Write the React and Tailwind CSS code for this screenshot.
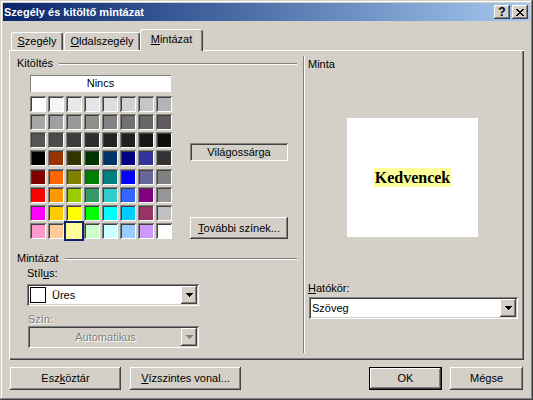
import React from "react";

// classic 3D edges
const raised =
  "shadow-[inset_-1px_-1px_#404040,inset_1px_1px_#ffffff,inset_-2px_-2px_#808080,inset_2px_2px_#d4d0c8]";
const sunken =
  "shadow-[inset_1px_1px_#808080,inset_-1px_-1px_#ffffff,inset_2px_2px_#404040,inset_-2px_-2px_#d4d0c8]";

const palette = [
  ["#ffffff", "#f7f5f7", "#e8e8e8", "#e6e4e8", "#dddcdf", "#d2d2d2", "#c6c5c8", "#b4b3b5"],
  ["#a6a6a6", "#a19fa2", "#98979a", "#8d8f8b", "#838183", "#727073", "#646763", "#5e5c5f"],
  ["#555555", "#4a4c4a", "#3c3c3c", "#2e2e2e", "#232421", "#202020", "#171717", "#0c0f0c"],
  ["#000000", "#993300", "#333300", "#003300", "#003366", "#000080", "#333399", "#333333"],
  ["#800000", "#ff6600", "#808000", "#008000", "#008080", "#0000ff", "#666699", "#808080"],
  ["#ff0000", "#ff9900", "#99cc00", "#339966", "#33cccc", "#3366ff", "#800080", "#969696"],
  ["#ff00ff", "#ffcc00", "#ffff00", "#00ff00", "#00ffff", "#00ccff", "#993366", "#c0c0c0"],
  ["#ff99cc", "#ffcc99", "#ffff99", "#ccffcc", "#ccffff", "#99ccff", "#cc99ff", "#ffffff"],
];

const DropButton = ({ disabled }) => (
  <div className={`w-4 h-full flex items-center justify-center bg-[#d4d0c8] ${raised}`}>
    <svg width="7" height="4" viewBox="0 0 7 4" shapeRendering="crispEdges">
      <path
        d="M0 0h7v1H0zM1 1h5v1H1zM2 2h3v1H2zM3 3h1v1H3z"
        fill={disabled ? "#808080" : "#000000"}
      />
    </svg>
  </div>
);

const Button = ({ className = "", children }) => (
  <div
    className={`h-[23px] flex items-center justify-center bg-[#d4d0c8] ${raised} ${className}`}
  >
    {children}
  </div>
);

const GroupHeader = ({ label, className = "" }) => (
  <div className={`flex items-center h-[13px] ${className}`}>
    <span>{label}</span>
    <div className="flex-1 ml-[6px] h-[2px] border-t border-t-[#808080] border-b border-b-white" />
  </div>
);

const Tab = ({ active, className = "", children }) => (
  <div
    className={`flex items-center justify-center bg-[#d4d0c8] border-l border-t border-white border-r border-r-[#404040] rounded-t-[3px] shadow-[inset_-1px_0_#808080] ${
      active ? "relative z-10 h-[22px] -mb-[1px] pb-[2px]" : "h-[18px]"
    } ${className}`}
  >
    {children}
  </div>
);

export default function App() {
  return (
    <div className="w-[533px] h-[400px] bg-[#d4d0c8] p-[3px] flex flex-col text-[11px] leading-[13px] text-black font-['Liberation_Sans',Arial,sans-serif] shadow-[inset_-1px_-1px_#404040,inset_1px_1px_#d4d0c8,inset_-2px_-2px_#808080,inset_2px_2px_#ffffff]">
      {/* Title bar */}
      <div className="h-[18px] flex items-center pl-[1px] pr-[2px] bg-linear-to-r from-[#0a246a] to-[#a6caf0]">
        <span className="font-bold text-white">Szegély és kitöltő mintázat</span>
        <div className="ml-auto flex gap-[2px]">
          <div className={`w-4 h-[14px] flex items-center justify-center bg-[#d4d0c8] font-bold text-[12px] leading-none ${raised}`}>
            ?
          </div>
          <div className={`w-4 h-[14px] flex items-center justify-center bg-[#d4d0c8] ${raised}`}>
            <svg width="8" height="7" viewBox="0 0 8 7" shapeRendering="crispEdges">
              <path
                d="M0 0h2v1H0zM6 0h2v1H6zM1 1h2v1H1zM5 1h2v1H5zM2 2h4v1H2zM3 3h2v1H3zM2 4h4v1H2zM1 5h2v1H1zM5 5h2v1H5zM0 6h2v1H0zM6 6h2v1H6z"
                fill="#000"
              />
            </svg>
          </div>
        </div>
      </div>

      {/* Tabs */}
      <div className="mt-[8px] ml-[6px] h-[21px] flex items-end">
        <Tab className="ml-[2px] w-[52px]">
          <span><u>S</u>zegély</span>
        </Tab>
        <Tab className="ml-[1px] w-[76px]">
          <span><u>O</u>ldalszegély</span>
        </Tab>
        <Tab active className="w-[63px]">
          <span><u>M</u>intázat</span>
        </Tab>
      </div>

      {/* Tab panel */}
      <div className="ml-[6px] w-[515px] h-[310px] flex shadow-[inset_1px_1px_#ffffff,inset_-1px_-1px_#404040,inset_-2px_-2px_#808080]">
        {/* Left column */}
        <div className="w-[294px] flex flex-col">
          <GroupHeader label="Kitöltés" className="mt-[7px] ml-[8px] mr-[6px]" />
          <div className="mt-[5px] ml-[21px] w-[141px] h-[17px] bg-white flex items-center justify-center shadow-[inset_1px_1px_#808080]">
            Nincs
          </div>
          <div className="mt-[4px] flex">
            <div className="ml-[21px] grid grid-cols-8 gap-[2px]">
              {palette.flat().map((c, i) =>
                i === 58 ? (
                  <div
                    key={i}
                    className="w-4 h-4 outline-2 outline-[#0a246a]"
                    style={{ backgroundColor: c }}
                  />
                ) : (
                  <div
                    key={i}
                    className="w-4 h-4 pl-[2px] pt-[2px] pr-[1px] pb-[1px] shadow-[inset_1px_1px_#808080,inset_-1px_-1px_#ffffff,inset_2px_2px_#404040]"
                  >
                    <div className="w-full h-full" style={{ backgroundColor: c }} />
                  </div>
                )
              )}
            </div>
            <div className="ml-[18px] flex flex-col">
              <div className="mt-[47px] w-[98px] h-[18px] flex items-center justify-center shadow-[inset_1px_1px_#808080,inset_-1px_-1px_#ffffff,inset_2px_2px_#404040]">
                Világossárga
              </div>
              <Button className="mt-[56px] w-[98px] !h-[22px]">
                <span><u>T</u>ovábbi színek...</span>
              </Button>
            </div>
          </div>

          <GroupHeader label="Mintázat" className="mt-[13px] ml-[8px] mr-[6px]" />
          <div className="mt-[2px] ml-[18px]">
            Stíl<u>u</u>s:
          </div>
          <div className={`mt-[4px] ml-[18px] w-[172px] h-[22px] p-[2px] bg-white flex ${sunken}`}>
            <div className="flex-1 flex items-center">
              <div className="ml-[1px] w-4 h-4 border border-black bg-white" />
              <span className="ml-[6px]">Üres</span>
            </div>
            <DropButton />
          </div>
          <div className="mt-[7px] ml-[19px] text-[#808080] [text-shadow:1px_1px_#ffffff]">
            Szín:
          </div>
          <div className={`ml-[19px] w-[171px] h-[22px] p-[2px] bg-[#d4d0c8] flex ${sunken}`}>
            <div className="flex-1 flex items-center justify-center text-[#808080] [text-shadow:1px_1px_#ffffff]">
              Automatikus
            </div>
            <DropButton disabled />
          </div>
        </div>

        {/* Right column */}
        <div className="mt-[6px] h-[297px] flex-1 border-l border-l-[#808080]">
          <div className="h-full border-l border-l-white pl-[3px] flex flex-col">
            <div className="mt-[2px]">Minta</div>
            <div className="mt-[47px] ml-[39px] w-[131px] h-[119px] bg-white flex items-center justify-center">
              <span className="bg-[#ffff99] px-[1px] font-['Liberation_Serif','Times_New_Roman',serif] font-bold text-[16px] leading-[19px]">
                Kedvencek
              </span>
            </div>
            <div className="mt-[45px]">
              <u>H</u>atókör:
            </div>
            <div className={`mt-[2px] ml-[1px] w-[209px] h-[22px] p-[2px] bg-white flex ${sunken}`}>
              <div className="flex-1 flex items-center pl-[1px]">Szöveg</div>
              <DropButton />
            </div>
          </div>
        </div>
      </div>

      {/* Bottom buttons */}
      <div className="mt-[7px] flex">
        <Button className="ml-[7px] w-[111px]">
          <span>Esz<u>k</u>öztár</span>
        </Button>
        <Button className="ml-[9px] w-[111px]">
          <span><u>V</u>ízszintes vonal...</span>
        </Button>
        <Button className="ml-auto w-[73px] border border-black">OK</Button>
        <Button className="ml-[8px] mr-[7px] w-[73px]">Mégse</Button>
      </div>
    </div>
  );
}
